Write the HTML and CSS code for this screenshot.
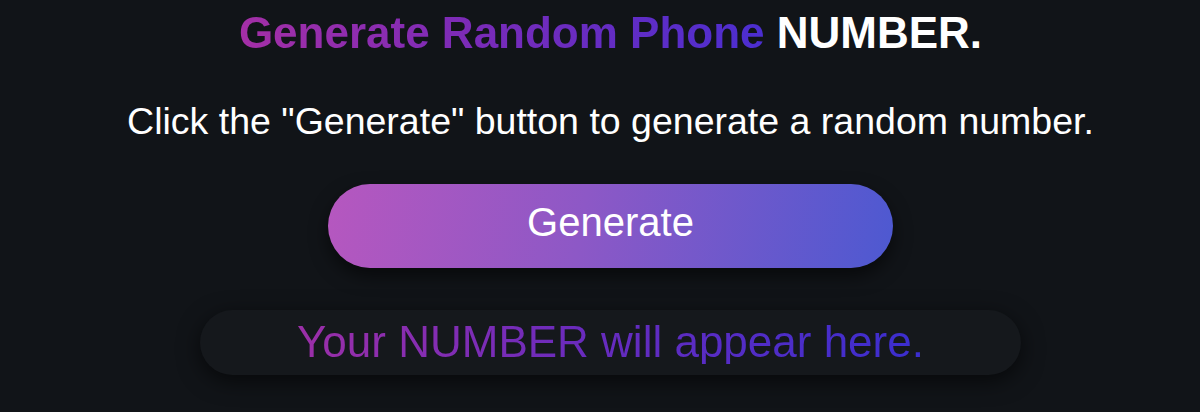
FILE: index.html
```html
<!DOCTYPE html>
<html lang="en">
<head>
<meta charset="utf-8">
<title>Generate Random Phone Number</title>
<link rel="stylesheet" href="styles.css">
</head>
<body>
<main class="page">
  <h1 class="title"><span class="grad">Generate Random Phone</span> NUMBER.</h1>
  <p class="desc">Click the "Generate" button to generate a random number.</p>
  <button class="gen-btn" type="button">Generate</button>
  <div class="result"><span class="result-text">Your NUMBER will appear here.</span></div>
</main>
</body>
</html>
```
FILE: styles.css
```css
html, body {
  margin: 0;
  padding: 0;
  background: #111418;
}
body {
  font-family: "Liberation Sans", Arial, Helvetica, sans-serif;
  color: #ffffff;
  min-height: 100vh;
}
.page {
  display: flex;
  flex-direction: column;
  align-items: center;
  padding: 8px 0 30px 21px;
  gap: 42px;
}
.title {
  margin: 0;
  font-size: 44px;
  font-weight: 700;
  line-height: 1.15;
  color: #ffffff;
}
.grad {
  background: linear-gradient(90deg, #a42fa6 0%, #7a2bb8 45%, #4b2ed0 100%);
  -webkit-background-clip: text;
  background-clip: text;
  color: transparent;
}
.desc {
  margin: 0;
  font-size: 37.5px;
  line-height: 1.1;
  color: #ffffff;
}
.gen-btn {
  width: 565px;
  height: 84px;
  border: none;
  border-radius: 42px;
  background: linear-gradient(100deg, #b657bf 0%, #8d58c6 45%, #4d59d1 100%);
  color: #ffffff;
  font-family: "Liberation Sans", Arial, Helvetica, sans-serif;
  font-size: 40px;
  box-shadow: 0 8px 18px rgba(0, 0, 0, 0.55);
  cursor: pointer;
  padding: 0 0 6px 0;
}
.result {
  width: 821px;
  height: 65px;
  border-radius: 33px;
  background: #15181c;
  box-shadow: 0 6px 22px rgba(0, 0, 0, 0.6);
  display: flex;
  align-items: center;
  justify-content: center;
}
.result-text {
  font-size: 44px;
  line-height: 1;
  background: linear-gradient(90deg, #9c2fa8 0%, #6a2bbd 45%, #3a2ecf 100%);
  -webkit-background-clip: text;
  background-clip: text;
  color: transparent;
}
```
